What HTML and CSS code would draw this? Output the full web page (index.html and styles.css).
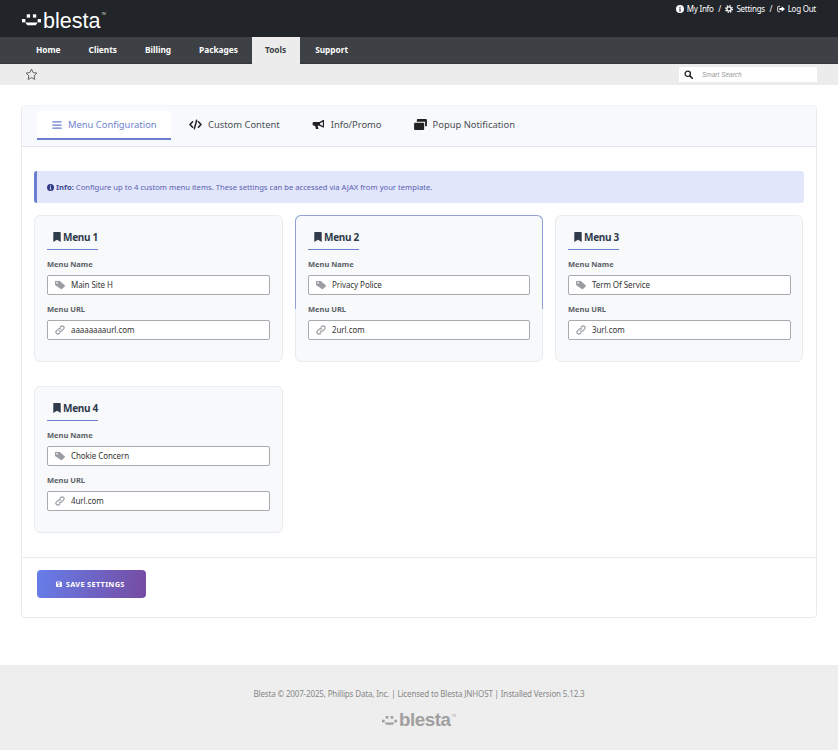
FILE: index.html
```html
<!DOCTYPE html>
<html lang="en">
<head>
<meta charset="utf-8">
<title>Blesta</title>
<link rel="stylesheet" href="styles.css">
</head>
<body>
<svg class="defs" width="0" height="0" aria-hidden="true">
  <symbol id="i-bookmark" viewBox="0 0 10 13"><path d="M0 1a1 1 0 0 1 1-1h8a1 1 0 0 1 1 1v12L5 10 0 13z" fill="currentColor"/></symbol>
  <symbol id="i-tag" viewBox="0 0 12 10"><path d="M0 1a1 1 0 0 1 1-1h4.500l6.100 5.200a1 1 0 0 1 0 1.500L8.400 9.800a1 1 0 0 1-1.400 0L0 5zM2.500 1.500a.9.900 0 1 0 .01 0z" fill="currentColor" fill-rule="evenodd"/></symbol>
  <symbol id="i-link" viewBox="0 0 12 12"><path d="M5 7a2.200 2.200 0 0 0 3.200 0l2-2A2.250 2.250 0 0 0 7 1.800l-.9.900M7 5a2.200 2.200 0 0 0-3.200 0l-2 2A2.250 2.250 0 0 0 5 10.200l.9-.9" fill="none" stroke="currentColor" stroke-width="1.400" stroke-linecap="round"/></symbol>
  <symbol id="i-info" viewBox="0 0 12 12"><path d="M6 0a6 6 0 1 0 0 12A6 6 0 0 0 6 0zm0 2.300a1 1 0 1 1 0 2 1 1 0 0 1 0-2zM4.800 5.200h2v3.400h.6v1H4.700v-1h.6V6.200h-.5z" fill="currentColor" fill-rule="evenodd"/></symbol>
</svg>

<header class="topbar">
  <div class="logo">
    <svg class="logo-smile" viewBox="0 0 20 12" aria-hidden="true"><rect x="5" y="0" width="3.500" height="3.500" fill="currentColor"/><rect x="11.500" y="0" width="3.500" height="3.500" fill="currentColor"/><rect x="0" y="5" width="3.500" height="3.500" fill="currentColor"/><rect x="16.500" y="5" width="3.500" height="3.500" fill="currentColor"/><path d="M3.500 8.500h13l-2 3H5.500z" fill="currentColor"/></svg>
    <span class="logo-text">blesta</span><span class="logo-tm">TM</span>
  </div>
  <nav class="userlinks">
    <a><svg class="ui" viewBox="0 0 12 12"><use href="#i-info"/></svg> My Info</a><span>/</span>
    <a><svg class="ui" viewBox="0 0 12 12" aria-hidden="true"><circle cx="6" cy="6" r="3.200" fill="none" stroke="currentColor" stroke-width="2"/><circle cx="6" cy="6" r="5" fill="none" stroke="currentColor" stroke-width="2" stroke-dasharray="2 1.930"/></svg> Settings</a><span>/</span>
    <a><svg class="ui" viewBox="0 0 12 12" aria-hidden="true"><path d="M4.500 2H2a1 1 0 0 0-1 1v6a1 1 0 0 0 1 1h2.500" fill="none" stroke="currentColor" stroke-width="1.300"/><path d="M7 2l5 4-5 4V7.600H3.500V4.400H7z" fill="currentColor"/></svg> Log Out</a>
  </nav>
</header>

<nav class="mainnav">
  <a>Home</a><a>Clients</a><a>Billing</a><a>Packages</a><a class="active">Tools</a><a>Support</a>
</nav>

<div class="subbar">
  <svg class="star" viewBox="0 0 14 14" aria-hidden="true"><path d="M7 1.200l1.800 3.700 4 .6-2.900 2.800.7 4L7 10.400l-3.600 1.900.7-4L1.200 5.500l4-.6z" fill="none" stroke="currentColor" stroke-width="1" stroke-linejoin="round"/></svg>
  <div class="search">
    <svg class="search-icon" viewBox="0 0 12 12" aria-hidden="true"><circle cx="5" cy="5" r="3.500" fill="none" stroke="currentColor" stroke-width="1.800"/><path d="M7.800 7.800L11 11" stroke="currentColor" stroke-width="2.200" stroke-linecap="round"/></svg>
    <span>Smart Search</span>
  </div>
</div>

<main class="page">
  <section class="panel">
    <div class="tabs">
      <a class="tab active">
        <svg class="tab-icon" viewBox="0 0 12 12" aria-hidden="true"><path d="M1 2.200h10M1 6h10M1 9.800h10" stroke="currentColor" stroke-width="1.500" stroke-linecap="round"/></svg>
        Menu Configuration</a>
      <a class="tab">
        <svg class="tab-icon wide" viewBox="0 0 14 12" aria-hidden="true"><path d="M3.800 3L1 6l2.800 3M10.200 3L13 6l-2.800 3M8.200 1.500L5.800 10.500" fill="none" stroke="currentColor" stroke-width="1.700" stroke-linecap="round" stroke-linejoin="round"/></svg>
        Custom Content</a>
      <a class="tab">
        <svg class="tab-icon wide" viewBox="0 0 14 12" aria-hidden="true"><path d="M13 1v8.400h-1L8 7.300H6l1 3.500H4.300L3.200 7.300H2a1.500 1.500 0 0 1-1.500-1.500v-1A1.500 1.500 0 0 1 2 3.300h6l4-2.300zM11.700 3L8.700 4.500v1.500l3 1.500z" fill="currentColor" fill-rule="evenodd"/></svg>
        Info/Promo</a>
      <a class="tab">
        <svg class="tab-icon wide" viewBox="0 0 14 12" aria-hidden="true"><path d="M4 0h9a1 1 0 0 1 1 1v6a1 1 0 0 1-1 1h-1V3H3V1a1 1 0 0 1 1-1z" fill="currentColor"/><path d="M1 4h9a1 1 0 0 1 1 1v6a1 1 0 0 1-1 1H1a1 1 0 0 1-1-1V5a1 1 0 0 1 1-1z" fill="currentColor"/></svg>
        Popup Notification</a>
    </div>

    <div class="panel-body">
      <div class="alert">
        <svg class="alert-icon" viewBox="0 0 12 12" aria-hidden="true"><use href="#i-info"/></svg>
        <span><strong>Info:</strong> Configure up to 4 custom menu items. These settings can be accessed via AJAX from your template.</span>
      </div>

      <div class="cards">
        <article class="card">
          <h3><svg class="bm" viewBox="0 0 10 13" aria-hidden="true"><use href="#i-bookmark"/></svg>Menu 1</h3>
          <label>Menu Name</label>
          <div class="field"><svg class="fi" viewBox="0 0 12 10" aria-hidden="true"><use href="#i-tag"/></svg><span>Main Site H</span></div>
          <label>Menu URL</label>
          <div class="field"><svg class="fi" viewBox="0 0 12 12" aria-hidden="true"><use href="#i-link"/></svg><span>aaaaaaaaurl.com</span></div>
        </article>
        <article class="card hovered">
          <h3><svg class="bm" viewBox="0 0 10 13" aria-hidden="true"><use href="#i-bookmark"/></svg>Menu 2</h3>
          <label>Menu Name</label>
          <div class="field"><svg class="fi" viewBox="0 0 12 10" aria-hidden="true"><use href="#i-tag"/></svg><span>Privacy Police</span></div>
          <label>Menu URL</label>
          <div class="field"><svg class="fi" viewBox="0 0 12 12" aria-hidden="true"><use href="#i-link"/></svg><span>2url.com</span></div>
        </article>
        <article class="card">
          <h3><svg class="bm" viewBox="0 0 10 13" aria-hidden="true"><use href="#i-bookmark"/></svg>Menu 3</h3>
          <label>Menu Name</label>
          <div class="field"><svg class="fi" viewBox="0 0 12 10" aria-hidden="true"><use href="#i-tag"/></svg><span>Term Of Service</span></div>
          <label>Menu URL</label>
          <div class="field"><svg class="fi" viewBox="0 0 12 12" aria-hidden="true"><use href="#i-link"/></svg><span>3url.com</span></div>
        </article>
        <article class="card">
          <h3><svg class="bm" viewBox="0 0 10 13" aria-hidden="true"><use href="#i-bookmark"/></svg>Menu 4</h3>
          <label>Menu Name</label>
          <div class="field"><svg class="fi" viewBox="0 0 12 10" aria-hidden="true"><use href="#i-tag"/></svg><span>Chokie Concern</span></div>
          <label>Menu URL</label>
          <div class="field"><svg class="fi" viewBox="0 0 12 12" aria-hidden="true"><use href="#i-link"/></svg><span>4url.com</span></div>
        </article>
      </div>
    </div>

    <div class="panel-foot">
      <button class="save" type="button">
        <svg class="save-icon" viewBox="0 0 12 12" aria-hidden="true"><path d="M1.500 1h7.300L11 3.200v6.300a1.500 1.500 0 0 1-1.500 1.500h-8A1.500 1.500 0 0 1 0 9.500v-7A1.500 1.500 0 0 1 1.500 1zM2 2.500v2.300h5.500V2.500zM5.500 6.500a1.600 1.600 0 1 0 .01 0z" fill="currentColor" fill-rule="evenodd"/></svg>
        SAVE SETTINGS
      </button>
    </div>
  </section>
</main>

<footer class="footer">
  <p>Blesta © 2007-2025, Phillips Data, Inc. | Licensed to Blesta JNHOST | Installed Version 5.12.3</p>
  <div class="logo logo-foot">
    <svg class="logo-smile" viewBox="0 0 20 12" aria-hidden="true"><rect x="5" y="0" width="3.500" height="3.500" fill="currentColor"/><rect x="11.500" y="0" width="3.500" height="3.500" fill="currentColor"/><rect x="0" y="5" width="3.500" height="3.500" fill="currentColor"/><rect x="16.500" y="5" width="3.500" height="3.500" fill="currentColor"/><path d="M3.500 8.500h13l-2 3H5.500z" fill="currentColor"/></svg>
    <span class="logo-text">blesta</span><span class="logo-tm">TM</span>
  </div>
</footer>
</body>
</html>
```

FILE: styles.css
```css
* { box-sizing: border-box; }
html, body { margin: 0; padding: 0; }
body { font-family: "Noto Sans", sans-serif; background: #fff; color: #333; width: 838px; }
.defs { position: absolute; }
a { color: inherit; text-decoration: none; }

.topbar { height: 37px; background: #212529; color: #fff; display: flex; justify-content: space-between; padding: 0 22px; }
.logo { display: flex; align-items: flex-start; color: #fff; }
.topbar .logo { padding-top: 6px; }
.logo-smile { width: 19px; height: 12px; margin-top: 8px; margin-right: 2px; }
.logo-text { font-family: "Liberation Sans", sans-serif; font-size: 21.500px; line-height: 26px; margin-top: 2px; }
.logo-tm { font-size: 3px; line-height: 4px; margin-top: 6px; margin-left: 1px; opacity: .8; }
.userlinks { display: flex; align-items: flex-start; gap: 4.500px; font-size: 8px; letter-spacing: -.25px; line-height: 10px; padding-top: 4px; font-weight: 400; }
.userlinks a { display: flex; align-items: center; gap: 3px; }
.ui { width: 8px; height: 8px; }

.mainnav { height: 27px; background: #3d4146; border-bottom: 1px solid #33373b; display: flex; padding-left: 22px; }
.mainnav a { font-size: 8.300px; font-weight: 700; color: #fff; height: 26px; line-height: 25px; padding: 0 14px; }
.mainnav a.active { background: #ececec; color: #3b3f44; height: 27px; padding: 0 14px 0 13px; margin-right: 1px; }

.subbar { height: 21px; background: #ececec; display: flex; justify-content: space-between; align-items: center; padding: 0 21px 0 25px; }
.star { width: 13px; height: 13px; color: #55595e; }
.search { width: 138px; height: 15px; background: #fff; display: flex; align-items: center; gap: 9px; padding-left: 5px; font-size: 6.500px; font-style: italic; color: #999; font-family: "Liberation Sans", sans-serif; }
.search-icon { width: 9px; height: 9px; color: #222; }

.page { padding: 20px 21px 47px 21px; }
.panel { width: 796px; height: 513px; border: 1px solid #e9ecef; border-top-color: #f3f4f8; border-radius: 4px; background: #fff; display: flex; flex-direction: column; }
.tabs { height: 41px; background: #f8f9fc; border-bottom: 1px solid #e3e6f0; display: flex; padding: 5px 0 0 15px; }
.tab { display: flex; align-items: center; gap: 6px; height: 29px; padding: 0 15px 2px 16px; font-size: 9.400px; color: #4a4f55; white-space: nowrap; margin-right: 1px; }
.tab-icon { width: 10px; height: 10px; color: #222; flex: none; }
.tab-icon.wide { width: 13px; height: 11px; }
.tab.active { background: #fff; color: #6f82cf; border-bottom: 2px solid #6a7fd0; padding: 0 15px; margin-right: 2px; width: 134px; }
.tab.active .tab-icon { color: #6a7fd0; }

.panel-body { padding: 24px 12px 0; flex: 1; }
.alert { height: 32px; background: #e1e6fb; border-left: 3px solid #6a7fd0; border-radius: 3px; display: flex; align-items: center; gap: 2px; padding-left: 10px; font-size: 7.650px; color: #5a5fb0; margin-bottom: 12px; }
.alert strong { color: #3f4690; font-weight: 700; }
.alert-icon { width: 7px; height: 7px; color: #2e3a87; }

.cards { display: grid; grid-template-columns: 249px 248px 248px; column-gap: 12px; row-gap: 24px; }
.card { position: relative; height: 147px; background: #f8f9fa; border: 1px solid #e9ecef; border-radius: 6px; padding: 12px 12px 0; }
.card.hovered::before { content: ""; position: absolute; left: -1px; right: -1px; top: -1px; height: 93px; border: 1px solid #8f9fd6; border-bottom: 0; border-radius: 6px 6px 0 0; pointer-events: none; }
.card h3 { margin: 0 0 9px; width: 51px; height: 22px; border-bottom: 1px solid #6a7fd0; font-size: 10px; letter-spacing: -.3px; line-height: 18px; font-weight: 700; color: #2f3a4a; display: flex; align-items: flex-start; white-space: nowrap; padding-left: 6px; }
.bm { width: 8px; height: 10px; margin: 4px 2px 0 0; color: #2f3a4a; flex: none; }
.card label { display: block; font-size: 7.500px; line-height: 10px; font-weight: 700; color: #5a6068; margin-bottom: 6px; }
.field { width: 223px; height: 20px; background: #fff; border: 1px solid #a7abb0; border-radius: 2px; display: flex; align-items: center; padding-left: 7px; gap: 6px; font-size: 8px; letter-spacing: -.08px; line-height: 10px; color: #333; margin-bottom: 9px; }
.card:nth-child(2) .field { width: 222px; }
.fi { width: 10px; height: 10px; color: #9a9ea3; flex: none; }

.panel-foot { height: 60px; border-top: 1px solid #e9ecef; padding: 12px 15px 0; }
.save { width: 109px; height: 28px; border: 0; border-radius: 4px; background: linear-gradient(100deg, #667eea, #764ba2); color: #fff; font-family: "Noto Sans", sans-serif; font-size: 7.400px; font-weight: 700; letter-spacing: .3px; display: flex; align-items: center; justify-content: center; gap: 3px; padding: 0 2px 1px 0; }
.save-icon { width: 6.500px; height: 6.500px; margin-top: 2px; }

.footer { height: 85px; background: #eeeeee; text-align: center; padding-top: 24px; color: #888; }
.footer p { margin: 0 0 5px; font-size: 8px; letter-spacing: -.15px; line-height: 10px; color: #888; }
.logo-foot { justify-content: center; color: #a0a0a0; }
.logo-foot .logo-smile { width: 15px; height: 11px; margin-top: 11px; }
.logo-foot .logo-text { font-size: 18.700px; font-weight: 700; letter-spacing: -.4px; line-height: 24px; margin-top: 4px; }
.logo-foot .logo-tm { margin-top: 10px; }
```
